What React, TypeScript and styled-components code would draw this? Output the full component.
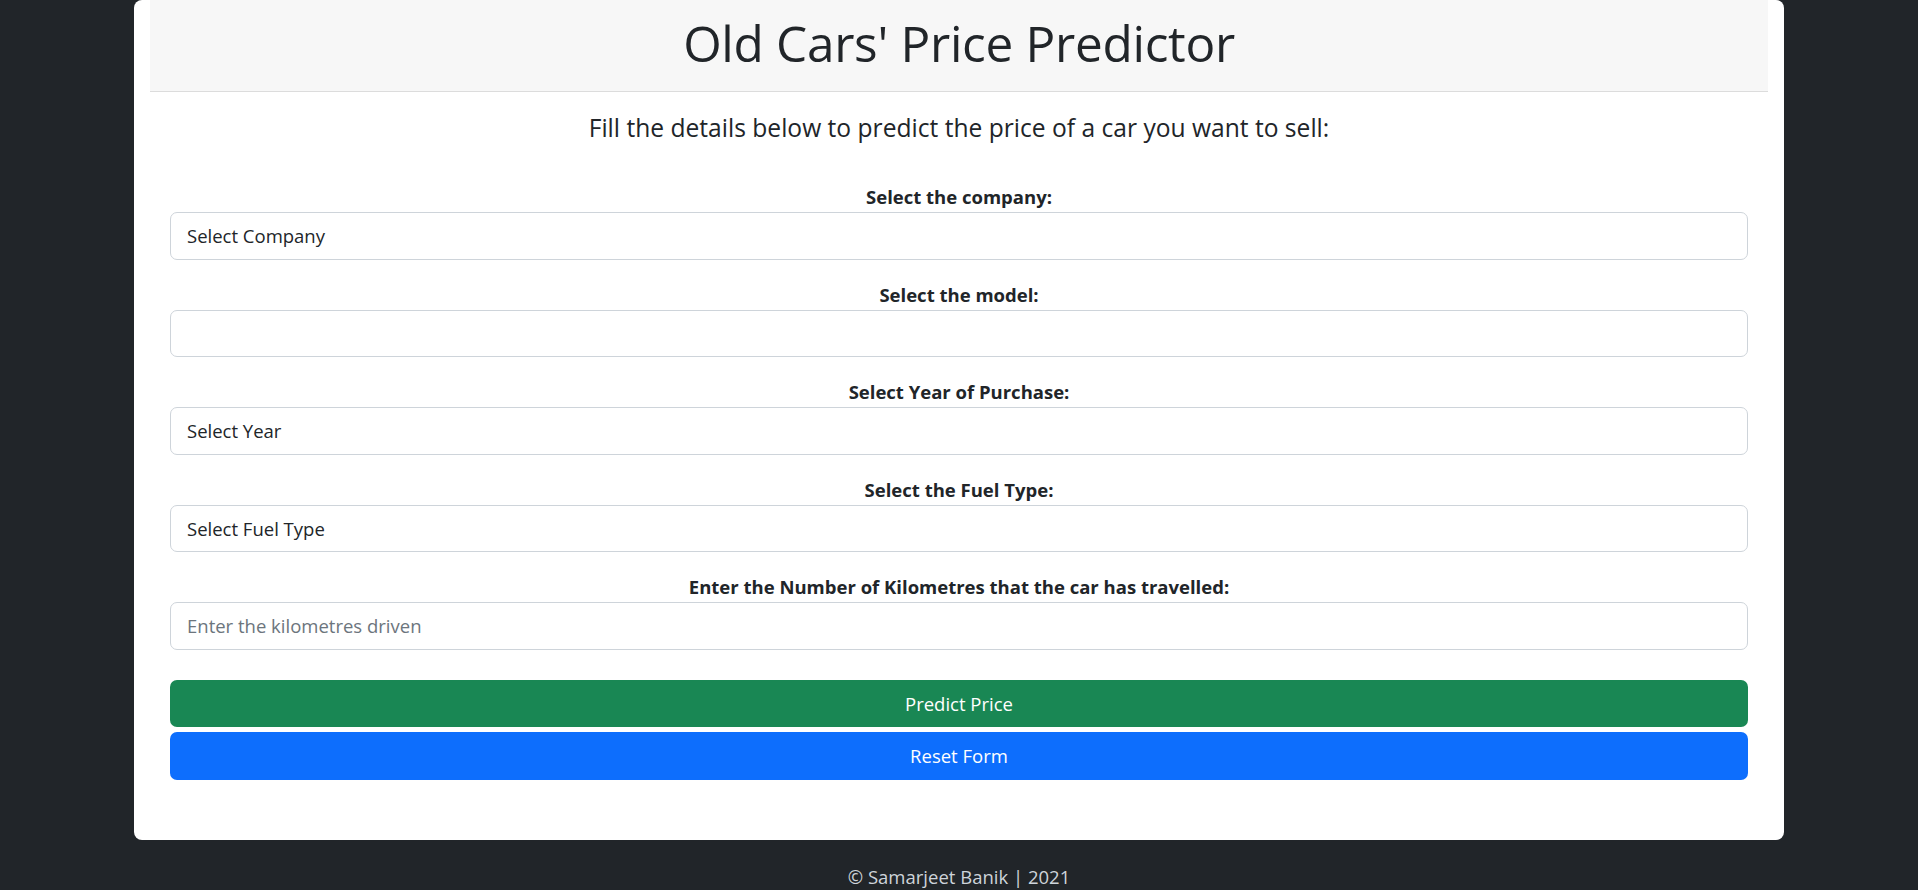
import React from "react";
import styled, { createGlobalStyle } from "styled-components";

const GlobalStyle = createGlobalStyle`
  html, body {
    margin: 0;
    padding: 0;
    background: #212529;
  }
  body {
    font-family: "Open Sans", "Noto Sans", "Liberation Sans", sans-serif;
    color: #212529;
  }
  * { box-sizing: border-box; }
`;

const Page = styled.div`
  display: flex;
  flex-direction: column;
  align-items: center;
  min-height: 890px;
`;

const Card = styled.div`
  width: 1650px;
  background: #ffffff;
  border-radius: 8px;
  padding: 0 16px 60px;
`;

const Header = styled.div`
  height: 92px;
  background: #f7f7f7;
  border-bottom: 1px solid #dcdcdc;
  display: flex;
  align-items: center;
  justify-content: center;
`;

const Title = styled.h1`
  margin: 0 0 4px;
  font-size: 49.5px;
  font-weight: 500;
  line-height: 1.2;
  letter-spacing: -0.3px;
  color: #212529;
`;

const Body = styled.div`
  padding: 0 20px;
`;

const Subtitle = styled.h5`
  margin: 21px 0 39px;
  font-size: 24.6px;
  font-weight: 400;
  line-height: 30px;
  text-align: center;
  color: #212529;
`;

const Form = styled.form`
  display: flex;
  flex-direction: column;
`;

const Field = styled.div`
  display: flex;
  flex-direction: column;
  margin-bottom: 20px;
`;

const Label = styled.label`
  display: block;
  height: 30px;
  line-height: 30px;
  font-size: 18.5px;
  font-weight: 700;
  text-align: center;
  color: #212529;
`;

const controlStyles = `
  display: block;
  width: 100%;
  height: 47.5px;
  padding: 0 16px;
  font-family: "Open Sans", "Noto Sans", "Liberation Sans", sans-serif;
  font-size: 18.5px;
  color: #212529;
  background: #fff;
  border: 1px solid #ced4da;
  border-radius: 7px;
  outline: none;
`;

const Select = styled.select`
  ${controlStyles}
  appearance: none;
  -webkit-appearance: none;
`;

const Input = styled.input`
  ${controlStyles}
  &::placeholder {
    color: #6c757d;
    opacity: 1;
  }
`;

const Actions = styled.div`
  display: flex;
  flex-direction: column;
  gap: 5px;
  margin-top: 10px;
`;

const Button = styled.button<{ $variant: "success" | "primary" }>`
  width: 100%;
  height: 47.5px;
  border: none;
  border-radius: 7px;
  font-family: "Open Sans", "Noto Sans", "Liberation Sans", sans-serif;
  font-size: 18.5px;
  color: #ffffff;
  background: ${(p) => (p.$variant === "success" ? "#198754" : "#0d6efd")};
  cursor: pointer;
`;

const Footer = styled.footer`
  margin-top: 22px;
  font-size: 18.5px;
  line-height: 30px;
  color: #ced4da;
  text-align: center;
`;

const fields: { label: string; kind: "select" | "input"; text: string }[] = [
  { label: "Select the company:", kind: "select", text: "Select Company" },
  { label: "Select the model:", kind: "select", text: "" },
  { label: "Select Year of Purchase:", kind: "select", text: "Select Year" },
  { label: "Select the Fuel Type:", kind: "select", text: "Select Fuel Type" },
  {
    label: "Enter the Number of Kilometres that the car has travelled:",
    kind: "input",
    text: "Enter the kilometres driven",
  },
];

export default function App() {
  return (
    <>
      <GlobalStyle />
      <Page>
        <Card>
          <Header>
            <Title>Old Cars' Price Predictor</Title>
          </Header>
          <Body>
            <Subtitle>
              Fill the details below to predict the price of a car you want to sell:
            </Subtitle>
            <Form onSubmit={(e) => e.preventDefault()}>
              {fields.map((f, i) => (
                <Field key={i}>
                  <Label>{f.label}</Label>
                  {f.kind === "select" ? (
                    <Select defaultValue={f.text}>
                      {f.text ? <option>{f.text}</option> : null}
                    </Select>
                  ) : (
                    <Input type="text" placeholder={f.text} />
                  )}
                </Field>
              ))}
              <Actions>
                <Button type="button" $variant="success">Predict Price</Button>
                <Button type="reset" $variant="primary">Reset Form</Button>
              </Actions>
            </Form>
          </Body>
        </Card>
        <Footer>© Samarjeet Banik | 2021</Footer>
      </Page>
    </>
  );
}
